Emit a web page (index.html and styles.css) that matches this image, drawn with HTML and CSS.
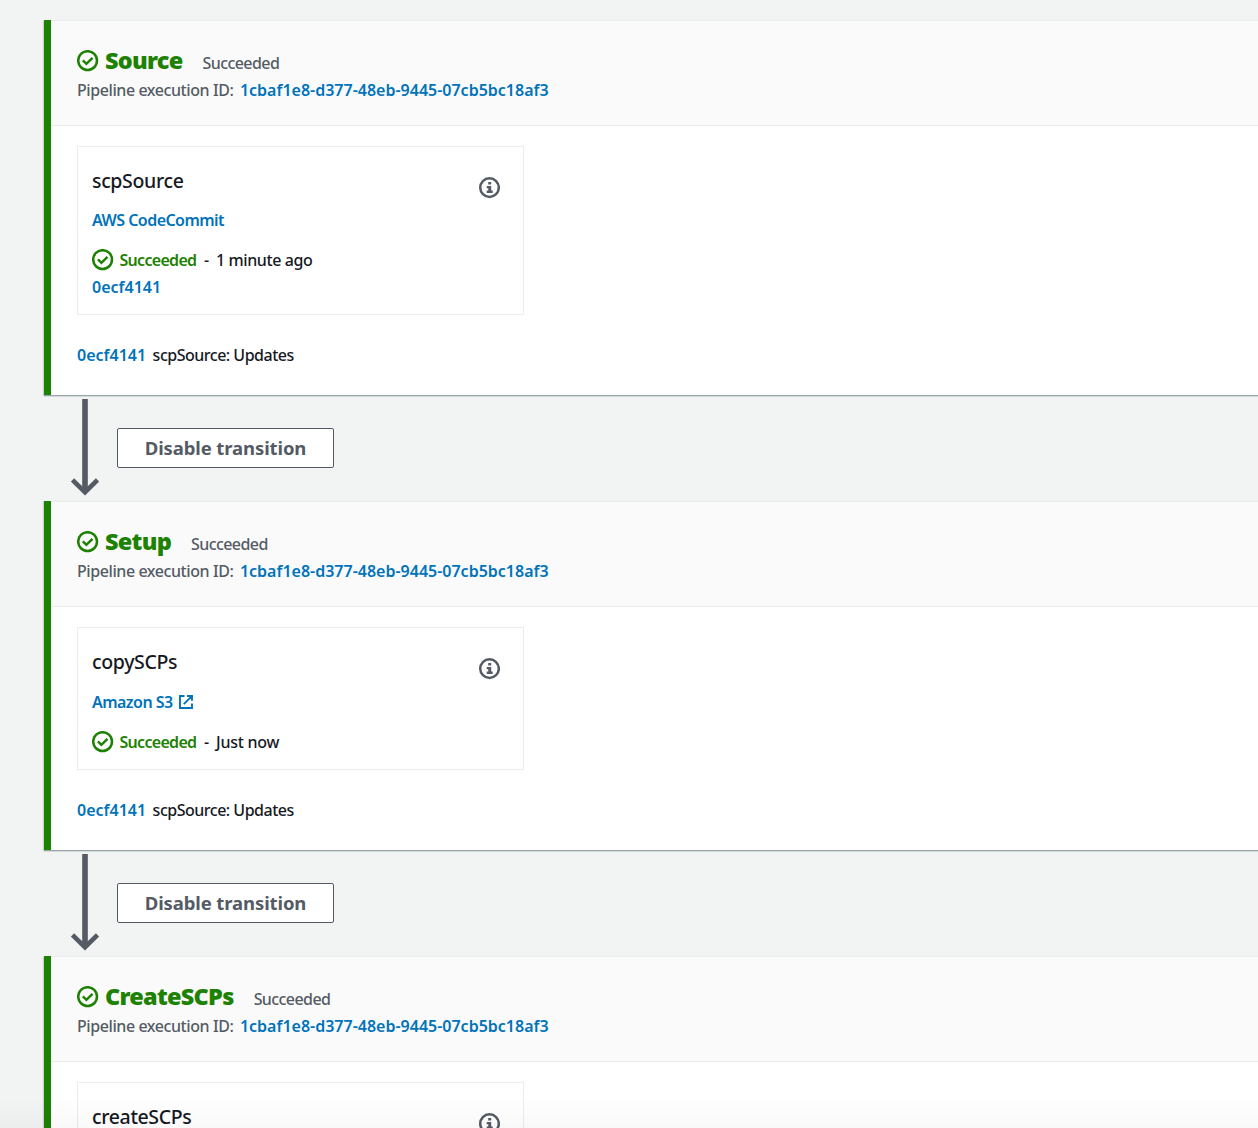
FILE: index.html
```html
<!DOCTYPE html>
<html lang="en">
<head>
<meta charset="utf-8">
<title>Pipeline</title>
<link rel="stylesheet" href="styles.css">
</head>
<body>
<svg class="defs" width="0" height="0">
  <symbol id="check" viewBox="0 0 22 22"><circle cx="10.600" cy="10.600" r="9.400"/><path d="M5.900 10.400l3.500 3.400 6.100-5.900"/></symbol>
  <symbol id="info" viewBox="0 0 22 22"><circle cx="11.500" cy="10.600" r="9.300"/><path class="solid" d="M10.200 5h3v2.600h-3zM8.700 9h4.500v4.500h1.500V16h-6v-2.500h1.600v-2.200H8.700z"/></symbol>
  <symbol id="external" viewBox="0 0 14 14"><path d="M5.500 1H1v12h12V8.500M8 1h5v4.800M12.600 1.400L4.800 9.200"/></symbol>
  <symbol id="arrow" viewBox="0 0 28 97"><path class="shaft" d="M14 0v92"/><path class="head" d="M1.500 81L14 93.200 26.500 81"/></symbol>
</svg>
<main class="pipeline">
  <section class="stage">
    <header class="stage-header">
      <div class="title-row"><svg class="icon check"><use href="#check"/></svg><h2 class="title">Source</h2><span class="state">Succeeded</span></div>
      <div class="execution"><span class="label">Pipeline execution ID:</span><a class="exec-id">1cbaf1e8-d377-48eb-9445-07cb5bc18af3</a></div>
    </header>
    <div class="stage-body">
      <article class="card">
        <div class="card-info">
          <h3 class="name">scpSource</h3>
          <div class="provider first"><a class="provider-link">AWS CodeCommit</a></div>
          <div class="status"><svg class="icon check"><use href="#check"/></svg><span class="ok">Succeeded</span><span class="dash">-</span><span class="time">1 minute ago</span></div>
          <div class="commit"><a class="hash">0ecf4141</a></div>
        </div>
        <svg class="icon info"><use href="#info"/></svg>
      </article>
      <div class="revision"><a class="hash">0ecf4141</a><span class="message">scpSource: Updates</span></div>
    </div>
  </section>
  <div class="transition"><svg class="arrow"><use href="#arrow"/></svg><button class="button">Disable transition</button></div>
  <section class="stage">
    <header class="stage-header">
      <div class="title-row"><svg class="icon check"><use href="#check"/></svg><h2 class="title">Setup</h2><span class="state">Succeeded</span></div>
      <div class="execution"><span class="label">Pipeline execution ID:</span><a class="exec-id">1cbaf1e8-d377-48eb-9445-07cb5bc18af3</a></div>
    </header>
    <div class="stage-body">
      <article class="card">
        <div class="card-info">
          <h3 class="name">copySCPs</h3>
          <div class="provider"><a class="provider-link">Amazon S3</a><svg class="icon external"><use href="#external"/></svg></div>
          <div class="status"><svg class="icon check"><use href="#check"/></svg><span class="ok">Succeeded</span><span class="dash">-</span><span class="time short">Just now</span></div>
        </div>
        <svg class="icon info"><use href="#info"/></svg>
      </article>
      <div class="revision"><a class="hash">0ecf4141</a><span class="message">scpSource: Updates</span></div>
    </div>
  </section>
  <div class="transition"><svg class="arrow"><use href="#arrow"/></svg><button class="button">Disable transition</button></div>
  <section class="stage">
    <header class="stage-header">
      <div class="title-row"><svg class="icon check"><use href="#check"/></svg><h2 class="title">CreateSCPs</h2><span class="state">Succeeded</span></div>
      <div class="execution"><span class="label">Pipeline execution ID:</span><a class="exec-id">1cbaf1e8-d377-48eb-9445-07cb5bc18af3</a></div>
    </header>
    <div class="stage-body">
      <article class="card">
        <div class="card-info">
          <h3 class="name">createSCPs</h3>
        </div>
        <svg class="icon info"><use href="#info"/></svg>
      </article>
    </div>
  </section>
</main>
<div class="fade"></div>
</body>
</html>
```
FILE: styles.css
```css
* { box-sizing: border-box; }
body {
  margin: 0;
  overflow: hidden;
  background: #f2f3f3;
  color: #16191f;
  font: 500 16px/28px "Noto Sans", "Open Sans", sans-serif;
}
h2, h3 { margin: 0; }
.defs { display: block; }
.pipeline { height: 1128px; overflow: hidden; padding: 20px 0 0 44px; }
.stage {
  border-left: 7px solid #1d8102;
  background: #fff;
  box-shadow: 0 1px 0 #98a4a5, 0 2px 0 #d5dbdb, -1px 1px 1px rgba(0, 28, 36, .15);
}
.stage-header {
  height: 106px;
  padding: 26px 26px 0;
  background: #fafafa;
  border-top: 1px solid #eaeded;
  border-bottom: 1px solid #eaeded;
}
.title-row, .execution, .status, .revision, .provider { display: flex; align-items: center; height: 28px; white-space: nowrap; }
.execution { margin-top: 1px; color: #545b64; }
.icon { flex: none; width: 22px; height: 22px; fill: none; stroke: currentColor; stroke-width: 2.5; }
.check { color: #1d8102; }
.title { margin: 0 20px 0 6px; padding-bottom: 2px; color: #1d8102; font-size: 23.5px; font-weight: 900; line-height: 28px; letter-spacing: -.75px; }
.state { color: #545b64; padding-top: 4px; letter-spacing: -.58px; }
.label { margin-right: 6.5px; letter-spacing: -.42px; }
a { color: #0073bb; font-weight: 600; }
.stage-body { padding: 20px 26px 26px; }
.card { display: flex; justify-content: space-between; width: 447px; padding: 20px 23px 13px 14px; border: 1px solid #eaeded; }
.name { font-size: 19.5px; font-weight: 500; line-height: 28px; letter-spacing: -.35px; }
.provider { margin-top: 12px; }
.provider.first { margin-top: 11px; }
.provider-link { letter-spacing: -.54px; }
.status { margin-top: 12px; }
.commit { height: 27px; line-height: 26px; }
.ok { margin-left: 5.5px; color: #1d8102; font-weight: 600; letter-spacing: -.7px; }
.dash { margin: 0 7px 0 7.5px; }
.time { letter-spacing: -.4px; }
.time.short { letter-spacing: -.25px; }
.info { margin-top: 10px; color: #545b64; }
.solid { fill: currentColor; stroke: none; }
.external { width: 14px; height: 14px; margin: 0 0 1px 6.500px; color: #0073bb; stroke-width: 1.9; }
.revision { margin-top: 26px; }
.message { margin-left: 6.5px; letter-spacing: -.49px; }
.transition { display: flex; height: 106px; padding-left: 27px; }
.arrow { width: 28px; height: 97px; margin: 4px 18px 0 0; fill: none; stroke: #545b64; }
.shaft { stroke-width: 5.6; }
.head { stroke-width: 4.6; }
.button {
  width: 217px;
  height: 40px;
  margin-top: 33px;
  padding: 0;
  border: 1px solid #545b64;
  border-radius: 2px;
  background: #fff;
  color: #545b64;
  font: inherit;
  font-size: 18.5px;
  font-weight: 700;
  letter-spacing: -.11px;
}
.fade { position: fixed; left: 0; right: 0; bottom: 0; height: 32px; background: linear-gradient(rgba(0, 0, 0, 0), rgba(0, 0, 0, .025)); }
```
